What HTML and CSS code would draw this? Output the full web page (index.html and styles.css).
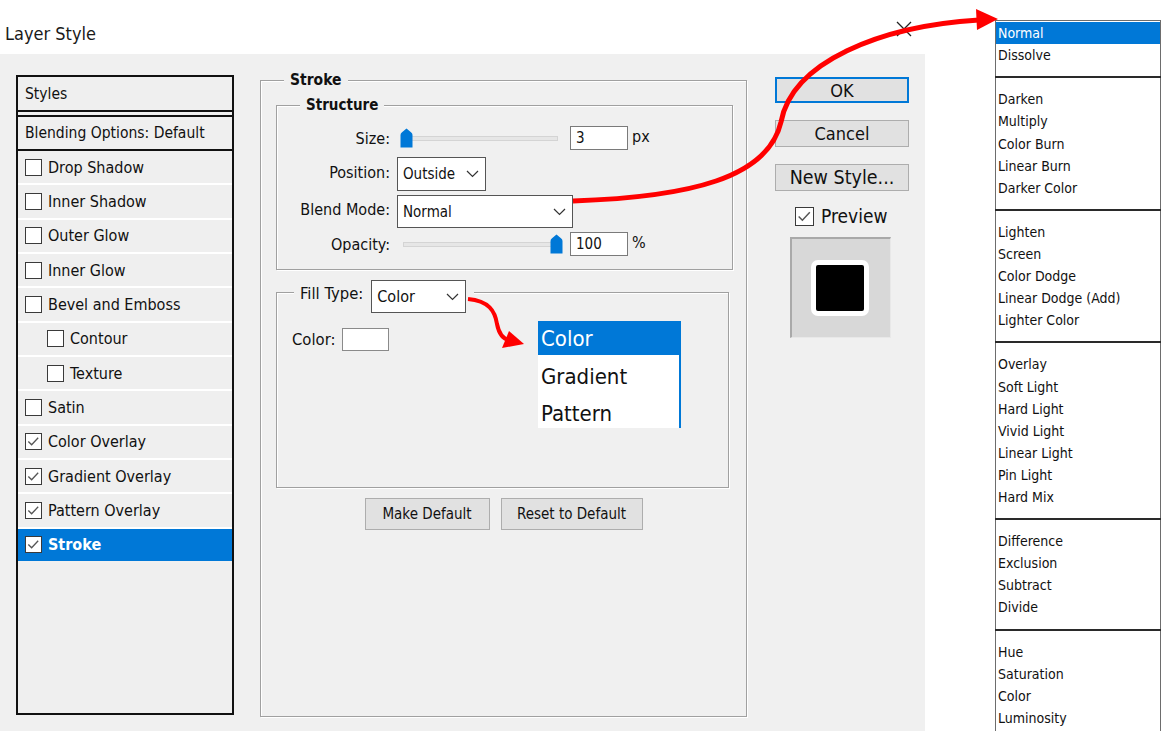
FILE: index.html
```html
<!DOCTYPE html>
<html lang="en">
<head>
<meta charset="utf-8">
<title>Layer Style</title>
<link rel="stylesheet" href="styles.css">
</head>
<body>
<div class="page">
  <header class="titlebar">
    <span class="title">Layer Style</span>
    <svg class="close" width="16" height="16" viewBox="0 0 16 16"><path d="M1 1 L15 15 M15 1 L1 15" stroke="#222" stroke-width="1.3" fill="none"/></svg>
  </header>

  <main class="dialog">
    <aside class="styles-panel">
      <div class="panel-head">Styles</div>
      <div class="panel-blend">Blending Options: Default</div>
      <ul class="effects">
        <li class="effect"><span class="cb"></span>Drop Shadow</li>
        <li class="effect"><span class="cb"></span>Inner Shadow</li>
        <li class="effect"><span class="cb"></span>Outer Glow</li>
        <li class="effect"><span class="cb"></span>Inner Glow</li>
        <li class="effect"><span class="cb"></span>Bevel and Emboss</li>
        <li class="effect sub"><span class="cb"></span>Contour</li>
        <li class="effect sub"><span class="cb"></span>Texture</li>
        <li class="effect"><span class="cb"></span>Satin</li>
        <li class="effect"><span class="cb checked"><svg viewBox="0 0 16 16"><path d="M2.5 8 L6 11.5 L13 4" stroke="#555" stroke-width="1.4" fill="none"/></svg></span>Color Overlay</li>
        <li class="effect"><span class="cb checked"><svg viewBox="0 0 16 16"><path d="M2.5 8 L6 11.5 L13 4" stroke="#555" stroke-width="1.4" fill="none"/></svg></span>Gradient Overlay</li>
        <li class="effect"><span class="cb checked"><svg viewBox="0 0 16 16"><path d="M2.5 8 L6 11.5 L13 4" stroke="#555" stroke-width="1.4" fill="none"/></svg></span>Pattern Overlay</li>
        <li class="effect selected"><span class="cb checked"><svg viewBox="0 0 16 16"><path d="M2.5 8 L6 11.5 L13 4" stroke="#555" stroke-width="1.4" fill="none"/></svg></span>Stroke</li>
      </ul>
    </aside>

    <section class="group stroke-group">
      <div class="legend">Stroke</div>
      <div class="group structure">
        <div class="legend">Structure</div>
        <div class="row row-size">
          <span class="label">Size:</span>
          <div class="slider">
            <div class="track"></div>
            <svg class="thumb thumb-left" width="13" height="20" viewBox="0 0 13 20"><path d="M0.5 19.5 V7 Q0.5 5.5 2 4.3 L6.5 0.5 L11 4.3 Q12.5 5.5 12.5 7 V19.5 Z" fill="#0078d7"/></svg>
          </div>
          <span class="input">3</span>
          <span class="unit">px</span>
        </div>
        <div class="row row-position">
          <span class="label">Position:</span>
          <div class="select sel-position"><span>Outside</span><svg width="13" height="8" viewBox="0 0 13 8"><path d="M1 1 L6.5 6.5 L12 1" stroke="#333" stroke-width="1.2" fill="none"/></svg></div>
        </div>
        <div class="row row-blend">
          <span class="label">Blend Mode:</span>
          <div class="select sel-blend"><span>Normal</span><svg width="13" height="8" viewBox="0 0 13 8"><path d="M1 1 L6.5 6.5 L12 1" stroke="#333" stroke-width="1.2" fill="none"/></svg></div>
        </div>
        <div class="row row-opacity">
          <span class="label">Opacity:</span>
          <div class="slider">
            <div class="track"></div>
            <svg class="thumb thumb-right" width="13" height="20" viewBox="0 0 13 20"><path d="M0.5 19.5 V7 Q0.5 5.5 2 4.3 L6.5 0.5 L11 4.3 Q12.5 5.5 12.5 7 V19.5 Z" fill="#0078d7"/></svg>
          </div>
          <span class="input">100</span>
          <span class="unit">%</span>
        </div>
      </div>

      <div class="group fill">
        <div class="legend fill-legend">
          <span>Fill Type:</span>
          <div class="select sel-fill"><span>Color</span><svg width="13" height="8" viewBox="0 0 13 8"><path d="M1 1 L6.5 6.5 L12 1" stroke="#333" stroke-width="1.2" fill="none"/></svg></div>
        </div>
        <div class="color-row">
          <span>Color:</span>
          <span class="swatch"></span>
        </div>
      </div>

      <div class="btn-row">
        <span class="btn btn-make">Make Default</span>
        <span class="btn btn-reset">Reset to Default</span>
      </div>
    </section>

    <div class="side">
      <span class="btn side-btn ok">OK</span>
      <span class="btn side-btn">Cancel</span>
      <span class="btn side-btn new">New Style...</span>
      <div class="preview-row">
        <span class="cb cb-big"><svg viewBox="0 0 16 16"><path d="M2.5 8 L6 11.5 L13 4" stroke="#555" stroke-width="1.4" fill="none"/></svg></span>
        <span>Preview</span>
      </div>
      <div class="preview-box">
        <div class="preview-swatch"></div>
      </div>
    </div>
  </main>

  <ul class="fill-list">
    <li class="on">Color</li>
    <li>Gradient</li>
    <li>Pattern</li>
  </ul>

  <ul class="blend-list">
    <li class="on">Normal</li>
    <li>Dissolve</li>
    <li class="sep"></li>
    <li>Darken</li>
    <li>Multiply</li>
    <li>Color Burn</li>
    <li>Linear Burn</li>
    <li>Darker Color</li>
    <li class="sep"></li>
    <li>Lighten</li>
    <li>Screen</li>
    <li>Color Dodge</li>
    <li>Linear Dodge (Add)</li>
    <li>Lighter Color</li>
    <li class="sep"></li>
    <li>Overlay</li>
    <li>Soft Light</li>
    <li>Hard Light</li>
    <li>Vivid Light</li>
    <li>Linear Light</li>
    <li>Pin Light</li>
    <li>Hard Mix</li>
    <li class="sep"></li>
    <li>Difference</li>
    <li>Exclusion</li>
    <li>Subtract</li>
    <li>Divide</li>
    <li class="sep"></li>
    <li>Hue</li>
    <li>Saturation</li>
    <li>Color</li>
    <li>Luminosity</li>
  </ul>

  <svg class="arrows" width="1163" height="731" viewBox="0 0 1163 731">
    <path d="M573 201 C 690 197 768 178 781 122 C 792 62 880 26 979 20" stroke="#ff0000" stroke-width="5" fill="none"/>
    <polygon points="998,19 976,9 977,30" fill="#ff0000"/>
    <path d="M468 299 C 489 301 495 311 497 324 C 499 334 503 339 509 340" stroke="#ff0000" stroke-width="4" fill="none"/>
    <polygon points="524,344 502,348 509,331" fill="#ff0000"/>
  </svg>
</div>
</body>
</html>
```

FILE: styles.css
```css
* { box-sizing: border-box; }

html, body {
  margin: 0;
  padding: 0;
  background: #ffffff;
}

body {
  font-family: "DejaVu Sans Condensed", "DejaVu Sans", sans-serif;
  font-size: 15px;
  color: #111;
}

.page {
  position: relative;
  width: 1163px;
  height: 731px;
  overflow: hidden;
  background: #ffffff;
}

ul { list-style: none; margin: 0; padding: 0; }

/* ---------- title bar ---------- */
.titlebar {
  width: 925px;
  height: 54px;
  padding: 12px 13px 0 5px;
  display: flex;
  align-items: center;
  justify-content: space-between;
}
.title {
  font-size: 18px;
  color: #1a1a1a;
}
.close { display: block; margin-top: -8px; }

/* ---------- dialog ---------- */
.dialog {
  width: 925px;
  height: 677px;
  background: #f0f0f0;
  display: flex;
  align-items: flex-start;
}

/* ---------- styles panel ---------- */
.styles-panel {
  margin: 21px 0 0 16px;
  width: 218px;
  height: 640px;
  border: 2px solid #111;
  background: #efefef;
  display: flex;
  flex-direction: column;
}
.panel-head {
  height: 35px;
  padding-left: 7px;
  display: flex;
  align-items: center;
  border-bottom: 2px solid #111;
  font-size: 15.5px;
}
.panel-blend {
  margin-top: 3px;
  height: 36px;
  padding-left: 7px;
  display: flex;
  align-items: center;
  border-top: 2px solid #111;
  border-bottom: 2px solid #111;
  font-size: 15.5px;
}
.effects { display: flex; flex-direction: column; }
.effect {
  height: 34.35px;
  border-bottom: 2px solid #ffffff;
  padding-left: 7px;
  display: flex;
  align-items: center;
  gap: 6px;
  font-size: 16px;
}
.effect.sub { padding-left: 29px; }
.effect.selected {
  background: #0078d7;
  color: #fff;
  font-weight: bold;
  border-bottom-color: #f0f0f0;
}

.cb {
  width: 17px;
  height: 17px;
  border: 1.5px solid #3a3a3a;
  background: #fff;
  display: inline-flex;
  flex: none;
}
.cb svg { width: 100%; height: 100%; display: block; }
.cb-big { width: 19px; height: 19px; }

/* ---------- group boxes ---------- */
.group {
  border: 1px solid #a0a0a0;
  box-shadow: inset 1px 1px 0 #ffffff, 1px 1px 0 #ffffff;
  display: flex;
  flex-direction: column;
}
.legend {
  align-self: flex-start;
  background: #f0f0f0;
  font-weight: bold;
  font-size: 15.5px;
  height: 18px;
  line-height: 18px;
  padding: 0 6px;
  margin-top: -10px;
}

.stroke-group {
  margin: 26px 0 0 26px;
  width: 487px;
  height: 637px;
}
.stroke-group > .legend { margin-left: 23px; }

.structure {
  margin: 16px 0 0 15px;
  width: 457px;
  height: 165px;
}
.structure > .legend { margin-left: 23px; margin-bottom: 12px; font-size: 15px; }

.row {
  display: flex;
  align-items: center;
}
.label {
  width: 113px;
  text-align: right;
  flex: none;
  font-size: 16px;
}
.row-size { height: 24px; }
.row-position { height: 34px; margin-top: 7px; }
.row-blend { height: 33px; margin-top: 4px; }
.row-opacity { height: 24px; margin-top: 4px; }
.row-position .label, .row-blend .label { margin-top: -4px; }

.slider {
  position: relative;
  margin-left: 10px;
  width: 160px;
  height: 24px;
  display: flex;
  align-items: center;
}
.track {
  margin-left: 3px;
  width: 155px;
  height: 5px;
  background: #e6e6e6;
  border: 1px solid #d4d4d4;
}
.thumb { position: absolute; top: 2px; }
.thumb-left { left: 0; }
.thumb-right { left: 150px; }

.input {
  margin-left: 10px;
  width: 58px;
  height: 24px;
  background: #fff;
  border: 1px solid #7a7a7a;
  padding-left: 5px;
  display: flex;
  align-items: center;
  font-size: 15px;
}
.unit { margin-left: 4px; margin-top: -4px; font-size: 16px; }

.select {
  margin-left: 7px;
  background: #fff;
  border: 1.5px solid #555;
  display: flex;
  align-items: center;
  justify-content: space-between;
  padding: 0 6px 0 5px;
  font-size: 15px;
}
.select svg { display: block; }
.sel-position { width: 89px; height: 34px; }
.sel-blend { width: 176px; height: 33px; }

/* fill type */
.fill {
  margin: 22px 0 0 15px;
  width: 453px;
  height: 196px;
}
.fill-legend {
  margin-top: -13px;
  margin-left: 17px;
  height: 33px;
  line-height: normal;
  padding: 0 8px 0 6px;
  display: flex;
  align-items: center;
  font-weight: normal;
}
.fill-legend > span { margin-top: -7px; font-size: 16.5px; }
.sel-fill { margin-left: 8px; width: 95px; height: 33px; font-size: 16px; }

.color-row {
  margin: 15px 0 0 15px;
  display: flex;
  align-items: center;
  gap: 7px;
  font-size: 16.5px;
}
.swatch {
  width: 47px;
  height: 23px;
  background: #fff;
  border: 1px solid #8a8a8a;
}

/* buttons */
.btn {
  display: flex;
  align-items: center;
  justify-content: center;
  background: #e1e1e1;
  border: 1.5px solid #adadad;
  font-size: 15px;
}
.btn-row {
  margin-top: 10px;
  display: flex;
  justify-content: center;
  gap: 11px;
}
.btn-make { width: 125px; height: 32px; }
.btn-reset { width: 142px; height: 32px; }

/* ---------- right side ---------- */
.side {
  margin: 23px 0 0 28px;
  width: 134px;
  display: flex;
  flex-direction: column;
}
.side-btn {
  height: 27px;
  font-size: 18px;
  margin-top: 17px;
}
.side-btn.new { font-size: 19.5px; }
.side-btn.ok {
  margin-top: 0;
  height: 26px;
  border: 2px solid #0078d7;
}
.preview-row {
  margin: 14px 0 0 20px;
  display: flex;
  align-items: center;
  gap: 7px;
  font-size: 19px;
}
.preview-box {
  margin: 10px 0 0 15px;
  width: 101px;
  height: 101px;
  background: #d8d8d8;
  border-top: 2px solid #a9a9a9;
  border-left: 2px solid #a9a9a9;
  border-right: 1px solid #e8e8e8;
  border-bottom: 1px solid #e8e8e8;
  display: flex;
  align-items: center;
  justify-content: center;
}
.preview-swatch {
  width: 58px;
  height: 56px;
  background: #000;
  border: 5px solid #fff;
  border-radius: 7px;
  margin-left: -2px;
}

/* ---------- popups ---------- */
.fill-list {
  position: absolute;
  left: 538px;
  top: 321px;
  width: 143px;
  height: 107px;
  overflow: hidden;
  background: #fff;
  border-right: 2px solid #0078d7;
  font-size: 22px;
}
.fill-list li {
  height: 38px;
  padding-left: 3px;
  display: flex;
  align-items: center;
}
.fill-list li.on {
  height: 34px;
  background: #0078d7;
  color: #fff;
}
.fill-list li.on + li { padding-top: 4px; height: 39px; }

.blend-list {
  position: absolute;
  left: 995px;
  top: 20px;
  width: 166px;
  height: 720px;
  background: #fff;
  border: 1px solid #6d6d6d;
  padding-top: 1px;
  font-size: 14px;
}
.blend-list li {
  height: 22.1px;
  padding-left: 2px;
  display: flex;
  align-items: center;
}
.blend-list li.on {
  background: #0078d7;
  color: #fff;
}
.blend-list li.sep {
  position: relative;
  margin: 0 -1px;
}
.blend-list li.sep::after {
  content: "";
  position: absolute;
  left: 0;
  right: 0;
  top: 10px;
  height: 2px;
  background: #2a2a2a;
}

.arrows {
  position: absolute;
  left: 0;
  top: 0;
  pointer-events: none;
}
```
